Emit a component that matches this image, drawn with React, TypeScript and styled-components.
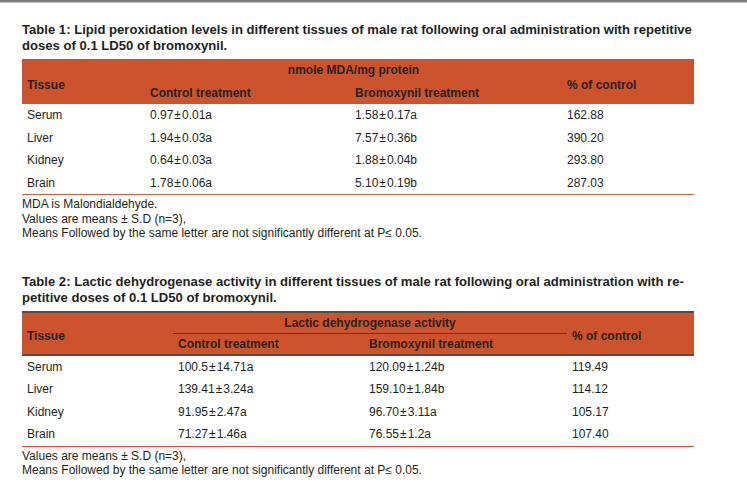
import React from 'react';
import styled, { createGlobalStyle } from 'styled-components';

const Global = createGlobalStyle`
  html, body { margin: 0; padding: 0; background: #ffffff; }
  body { font-family: "Liberation Sans", Arial, Helvetica, sans-serif; color: #231f20; }
`;

const Page = styled.div`
  width: 747px;
  height: 492px;
  overflow: hidden;
  display: flex;
  flex-direction: column;
`;

const TopRule = styled.div`
  height: 3px;
  flex: none;
  background: linear-gradient(to bottom, #6a6a6a, #8e8e8e 55%, #d8d8d8);
`;

const Section = styled.section<{ $top: number }>`
  margin-top: ${(p) => p.$top}px;
  padding-left: 22px;
  width: 672px;
`;

const Title = styled.h2`
  margin: 0 0 5px 0;
  font-size: 13.1px;
  line-height: 16px;
  font-weight: bold;
  white-space: nowrap;
  color: #231f20;
`;

const Header = styled.div<{ $cols: string; $framed?: boolean }>`
  display: grid;
  grid-template-columns: ${(p) => p.$cols};
  grid-template-rows: ${(p) => (p.$framed ? '21px 20px' : '22px 23px')};
  background: #cc532c;
  border-top: ${(p) => (p.$framed ? '2px solid #5e4a40' : 'none')};
  border-bottom: ${(p) => (p.$framed ? '2px solid #5e4a40' : 'none')};
  font-size: 12px;
  font-weight: bold;
  color: #2a2220;
`;

const SpanCell = styled.div<{ $col: number }>`
  grid-column: ${(p) => p.$col};
  grid-row: 1 / 3;
  display: flex;
  align-items: center;
  padding: 6px 0 0 5px;
`;

const GroupLabel = styled.div<{ $rule?: boolean }>`
  grid-column: 2 / 4;
  grid-row: 1;
  display: flex;
  align-items: center;
  justify-content: center;
  border-bottom: ${(p) => (p.$rule ? '1.5px solid #4a3a33' : 'none')};
`;

const SubLabel = styled.div<{ $col: number }>`
  grid-column: ${(p) => p.$col};
  grid-row: 2;
  display: flex;
  align-items: center;
  padding-left: 5px;
`;

const Body = styled.div<{ $line: string }>`
  border-bottom: 1.5px solid ${(p) => p.$line};
`;

const Row = styled.div<{ $cols: string }>`
  display: grid;
  grid-template-columns: ${(p) => p.$cols};
  height: 22.5px;
  align-items: center;
  font-size: 12px;
  color: #231f20;
`;

const Cell = styled.div`
  padding-left: 5px;
  white-space: nowrap;
`;

const Pm = styled.span`
  margin: 0 1px;
`;

const Notes = styled.div`
  margin-top: 2px;
  font-size: 12px;
  line-height: 14.5px;
  color: #231f20;
  white-space: nowrap;
`;

const Value: React.FC<{ text: string }> = ({ text }) => {
  const parts = text.split('±');
  if (parts.length < 2) return <>{text}</>;
  return (
    <>
      {parts[0]}
      <Pm>±</Pm>
      {parts[1]}
    </>
  );
};

type TableData = {
  cols: string;
  group: string;
  framed?: boolean;
  line: string;
  rows: string[][];
};

const DataTable: React.FC<TableData> = ({ cols, group, framed, line, rows }) => (
  <>
    <Header $cols={cols} $framed={framed}>
      <SpanCell $col={1}>Tissue</SpanCell>
      <GroupLabel $rule={framed}>{group}</GroupLabel>
      <SubLabel $col={2}>Control treatment</SubLabel>
      <SubLabel $col={3}>Bromoxynil treatment</SubLabel>
      <SpanCell $col={4}>% of control</SpanCell>
    </Header>
    <Body $line={line}>
      {rows.map((r) => (
        <Row key={r[0]} $cols={cols}>
          {r.map((c, i) => (
            <Cell key={i}>
              <Value text={c} />
            </Cell>
          ))}
        </Row>
      ))}
    </Body>
  </>
);

const table1Rows = [
  ['Serum', '0.97±0.01a', '1.58±0.17a', '162.88'],
  ['Liver', '1.94±0.03a', '7.57±0.36b', '390.20'],
  ['Kidney', '0.64±0.03a', '1.88±0.04b', '293.80'],
  ['Brain', '1.78±0.06a', '5.10±0.19b', '287.03'],
];

const table2Rows = [
  ['Serum', '100.5±14.71a', '120.09±1.24b', '119.49'],
  ['Liver', '139.41±3.24a', '159.10±1.84b', '114.12'],
  ['Kidney', '91.95±2.47a', '96.70±3.11a', '105.17'],
  ['Brain', '71.27±1.46a', '76.55±1.2a', '107.40'],
];

export default function App() {
  return (
    <Page>
      <Global />
      <TopRule />
      <Section $top={19}>
        <Title>
          Table 1: Lipid peroxidation levels in different tissues of male rat following oral administration with repetitive
          <br />
          doses of 0.1 LD50 of bromoxynil.
        </Title>
        <DataTable
          cols="123px 205px 212px 132px"
          group="nmole MDA/mg protein"
          line="#c75e43"
          rows={table1Rows}
        />
        <Notes>
          MDA is Malondialdehyde.
          <br />
          Values are means ± S.D (n=3),
          <br />
          Means Followed by the same letter are not significantly different at P≤ 0.05.
        </Notes>
      </Section>
      <Section $top={33}>
        <Title>
          Table 2: Lactic dehydrogenase activity in different tissues of male rat following oral administration with re-
          <br />
          petitive doses of 0.1 LD50 of bromoxynil.
        </Title>
        <DataTable
          cols="151px 191px 203px 127px"
          group="Lactic dehydrogenase activity"
          framed
          line="#dc4f27"
          rows={table2Rows}
        />
        <Notes>
          Values are means ± S.D (n=3),
          <br />
          Means Followed by the same letter are not significantly different at P≤ 0.05.
        </Notes>
      </Section>
    </Page>
  );
}
